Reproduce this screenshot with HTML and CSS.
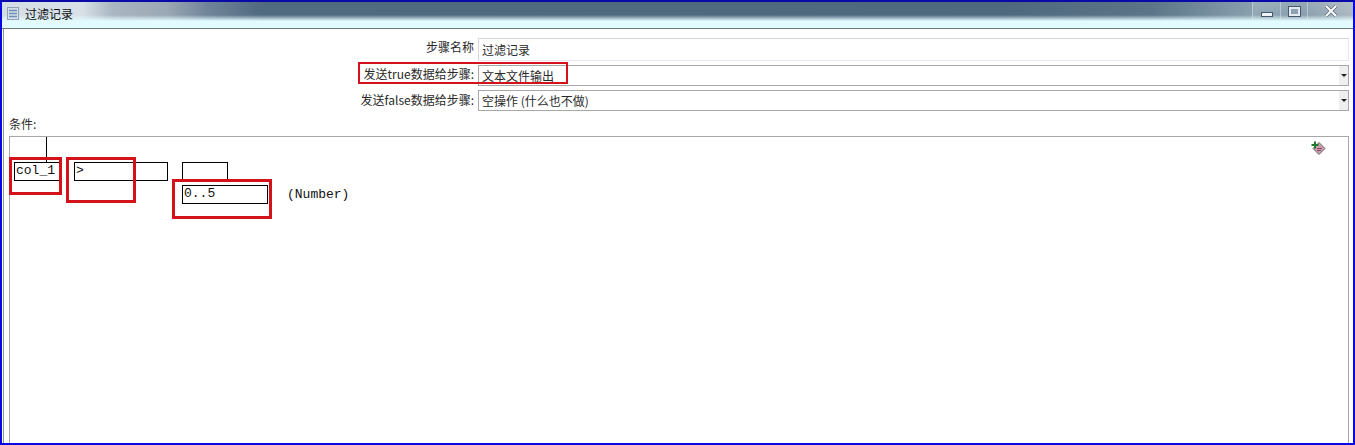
FILE: index.html
```html
<!DOCTYPE html>
<html lang="zh">

<head>
  <meta charset="UTF-8">
  <title>过滤记录</title>
  <link rel="stylesheet" href="styles.css">
</head>

<body>
  <div class="window">
    <!-- Title bar -->
    <div class="titlebar">
      <svg class="app-icon" width="12" height="13" viewBox="0 0 12 13">
        <rect x="0.5" y="0.5" width="11" height="12" fill="#d5e0ea" stroke="#8fa2b5"/>
        <path d="M2 3.500h8M2 6.500h8M2 9.500h8" stroke="#6d8fb4" stroke-width="1.300"/>
      </svg>
      <span class="title">过滤记录</span>
      <div class="controls">
        <div class="ctrl ctrl-min"><span class="min-glyph"></span></div>
        <div class="ctrl ctrl-max"><span class="max-glyph"></span></div>
        <div class="ctrl ctrl-close">
          <svg width="14" height="12" viewBox="0 0 14 12">
            <path d="M2 1l10 10M12 1L2 11" stroke="#5a6a78" stroke-width="3.400"/>
            <path d="M2 1l10 10M12 1L2 11" stroke="#fff" stroke-width="2"/>
          </svg>
        </div>
      </div>
    </div>

    <!-- Step form -->
    <div class="content">
      <div class="form-row row-name">
        <label class="form-label">步骤名称</label>
        <div class="field">过滤记录</div>
      </div>
      <div class="form-row row-true">
        <label class="form-label">发送true数据给步骤:</label>
        <div class="field field-select">文本文件输出<span class="arrow"></span></div>
        <span class="red-mark red-true"></span>
      </div>
      <div class="form-row row-false">
        <label class="form-label">发送false数据给步骤:</label>
        <div class="field field-select">空操作 (什么也不做)<span class="arrow"></span></div>
      </div>
      <div class="cond-label">条件:</div>

      <!-- Condition editor -->
      <div class="cond-box">
        <svg class="add-icon" width="18" height="18" viewBox="0 0 18 18">
          <path d="M10 3.500l6 6-6 6-6-6z" fill="#cf9bb0" stroke="#6a6a5a"/>
          <path d="M8 9.500h5M8 11.500h4" stroke="#7c4a5c"/>
          <path d="M6 2.500v7M2.500 6h7" stroke="#1d7a2a" stroke-width="2"/>
        </svg>
        <div class="cond-tree">
          <div class="cond-col">
            <span class="stem"></span>
            <div class="cbox box-field">col_1</div>
            <span class="red-mark red-field"></span>
          </div>
          <div class="cond-col">
            <div class="cbox box-op">&gt;</div>
            <span class="red-mark red-op"></span>
          </div>
          <div class="cond-col col-value">
            <div class="cbox box-empty"></div>
            <div class="value-row">
              <div class="cbox box-value">0..5</div>
              <span class="value-type">(Number)</span>
            </div>
            <span class="red-mark red-value"></span>
          </div>
        </div>
      </div>
    </div>
  </div>
</body>

</html>
```

FILE: styles.css
```css
/* Global Styles */
html,
body {
  margin: 0;
  padding: 0;
  height: 100%;
  overflow: hidden;
}

body {
  font-family: "Noto Sans CJK SC", "Liberation Sans", sans-serif;
  font-size: 12px;
  color: #2a2a2a;
}

.window {
  box-sizing: border-box;
  width: 1355px;
  height: 445px;
  display: flex;
  flex-direction: column;
  border: 2px solid #0808e6;
  border-top-color: #0a0aa6;
  background-color: #fff;
}

/* Title bar */
.titlebar {
  box-sizing: border-box;
  height: 27px;
  flex: none;
  display: flex;
  align-items: center;
  padding: 0 0 3px 5px;
  background:
    linear-gradient(to bottom, rgba(226, 251, 255, 0) 0, rgba(226, 251, 255, 0) 13px, rgba(226, 251, 255, 1) 19px),
    linear-gradient(to right, #d3dde6 0, #d8e1e8 80px, #aab6c2 110px, #9aa7b4 165px, #71859a 205px, #506a80 260px, #4e687e 1000px, #5c7588 1150px, #88a0ae 1250px, #7e95a6 1300px, #a4b2bc 1351px);
  border-bottom: 1px solid #6c7a78;
}

.app-icon {
  flex: none;
}

.title {
  margin-left: 6px;
  font-size: 12px;
  color: #111;
}

.controls {
  margin-left: auto;
  align-self: flex-start;
  display: flex;
  height: 18px;
}

.ctrl {
  box-sizing: border-box;
  height: 18px;
  display: flex;
  align-items: center;
  justify-content: center;
  border-left: 1px solid rgba(225, 238, 245, 0.45);
  background: linear-gradient(to bottom, rgba(255, 255, 255, 0.18), rgba(255, 255, 255, 0.04));
}

.ctrl-min {
  width: 28px;
}

.ctrl-max {
  width: 27px;
}

.ctrl-close {
  width: 46px;
}

.min-glyph {
  width: 10px;
  height: 3px;
  margin-top: 7px;
  background-color: #eef3f7;
  border: 1px solid #46586a;
}

.max-glyph {
  box-sizing: border-box;
  width: 11px;
  height: 9px;
  border: 2px solid #e4ebf0;
  outline: 1px solid #46586a;
}

/* Form Styles */
.content {
  flex: 1;
  min-height: 0;
  display: flex;
  flex-direction: column;
  padding: 9px 4px 0 0;
  border-left: 1px solid #8d979c;
  margin-left: 1px;
}

.form-row {
  position: relative;
  display: flex;
  align-items: center;
  justify-content: flex-end;
  height: 21px;
  margin-bottom: 4px;
}

.row-name {
  height: 23px;
}

.form-label {
  white-space: nowrap;
  text-align: right;
  margin-right: 4px;
}

.row-name .form-label {
  padding-bottom: 6px;
}

.row-true .form-label {
  padding-bottom: 4px;
}

.row-false .form-label {
  padding-bottom: 2px;
}

.field {
  box-sizing: border-box;
  width: 871px;
  height: 100%;
  line-height: 19px;
  padding-left: 3px;
  border: 1px solid #d7d7d7;
  border-right-color: #e4e8f0;
  border-bottom-color: #e4e8f0;
  position: relative;
  flex: none;
}

.row-name .field {
  line-height: 21px;
}

.field-select {
  border: 1px solid #a8a8a8;
}

.arrow {
  position: absolute;
  right: 0;
  top: 0;
  width: 9px;
  height: 100%;
  background-color: #efefef;
}

.arrow::after {
  content: "";
  position: absolute;
  top: 8px;
  left: 2px;
  border-left: 3px solid transparent;
  border-right: 3px solid transparent;
  border-top: 3px solid #222;
}

.cond-label {
  margin-bottom: 4px;
  margin-left: 5px;
  line-height: 17px;
}

/* Condition editor */
.cond-box {
  position: relative;
  flex: 1;
  margin-left: 5px;
  border: 1px solid #a8a8a8;
  border-bottom: none;
  font-family: "Liberation Mono", monospace;
  font-size: 13px;
  color: #111;
}

.add-icon {
  position: absolute;
  right: 21px;
  top: 2px;
}

.cond-tree {
  display: flex;
  padding: 25px 0 0 4px;
}

.cond-col {
  position: relative;
}

.cbox {
  box-sizing: border-box;
  height: 19px;
  line-height: 16px;
  padding-left: 1px;
  border: 1px solid #000;
  background-color: #fff;
}

.box-field {
  width: 46px;
}

.box-op {
  width: 94px;
  margin-left: 14px;
}

.col-value {
  margin-left: 14px;
}

.box-empty {
  width: 46px;
  border-bottom: none;
}

.box-value {
  width: 86px;
}

.value-row {
  display: flex;
  align-items: center;
  margin-top: 4px;
}

.value-type {
  margin-left: 19px;
  margin-bottom: 1px;
}

.stem {
  position: absolute;
  left: 32px;
  top: -25px;
  width: 1px;
  height: 25px;
  background-color: #000;
}

/* Red annotations drawn over the dialog */
.red-mark {
  position: absolute;
  box-sizing: border-box;
  border: 3px solid #d4121c;
}

.red-true {
  right: 781px;
  top: -3px;
  width: 210px;
  height: 22px;
  border-width: 2px;
}

.red-field {
  left: -5px;
  top: -5px;
  width: 53px;
  height: 38px;
}

.red-op {
  left: 6px;
  top: -5px;
  width: 70px;
  height: 46px;
}

.red-value {
  left: -10px;
  top: 17px;
  width: 100px;
  height: 40px;
}
```
